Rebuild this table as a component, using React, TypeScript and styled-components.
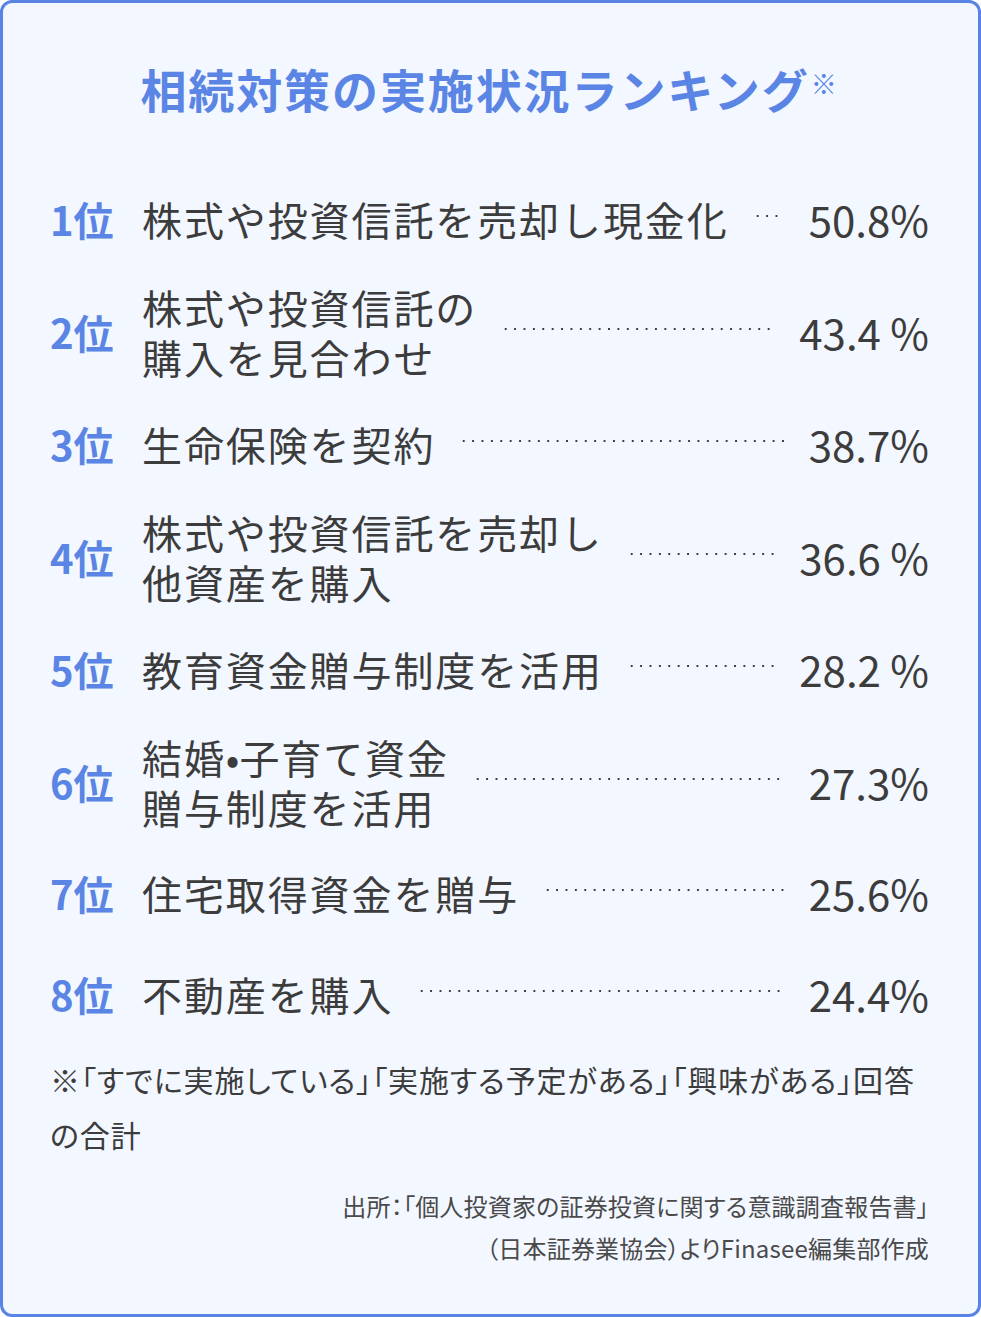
import React from "react";
import styled, { createGlobalStyle } from "styled-components";

const Global = createGlobalStyle`
  html, body { margin: 0; padding: 0; background: #ffffff; }
  body { font-family: "Noto Sans CJK JP", "Noto Sans", sans-serif; }
  * { box-sizing: border-box; }
`;

const Card = styled.div`
  width: 981px;
  height: 1317px;
  background: #f3f7ff;
  border: 3px solid #5a84e4;
  border-radius: 12px;
  padding: 53px 49px 0 47px;
  display: flex;
  flex-direction: column;
  color: #3c3c3c;
`;

const Title = styled.h1`
  margin: 0 0 49px;
  height: 64px;
  line-height: 64px;
  text-align: center;
  font-size: 46px;
  font-weight: 700;
  letter-spacing: 1.9px;
  color: #5a85e4;
`;

const Note = styled.sup`
  font-size: 26px;
  font-weight: 400;
  vertical-align: 14px;
  line-height: 0;
  margin-left: 1px;
`;

const List = styled.div`
  display: flex;
  flex-direction: column;
`;

const Row = styled.div<{ $space: number }>`
  display: flex;
  align-items: center;
  height: 100px;
  margin-top: ${(p) => p.$space}px;
`;

const Rank = styled.div`
  flex: none;
  width: 92px;
  font-size: 40px;
  font-weight: 700;
  color: #5a85e4;
  line-height: 1;
`;

const Label = styled.div`
  flex: none;
  font-size: 40px;
  letter-spacing: 1.9px;
  line-height: 50px;
  white-space: nowrap;
`;

const Dot = styled.span`
  font-feature-settings: "palt";
  letter-spacing: 0;
`;

const Leader = styled.div`
  flex: 1;
  height: 4px;
  margin: 0 25px 6px 24px;
  background-image: radial-gradient(circle, #3c3c3c 1.2px, transparent 1.5px);
  background-size: 9.4px 4px;
  background-repeat: repeat-x;
  background-position: left center;
`;

const Value = styled.div`
  flex: none;
  font-size: 42px;
  line-height: 1;
  white-space: pre;
`;

const Footnote = styled.p`
  margin: 8px 0 0;
  font-size: 30px;
  line-height: 55px;
  font-feature-settings: "palt";
  letter-spacing: 0.9px;
`;

const Source = styled.p`
  margin: 23px 0 0;
  text-align: right;
  font-size: 24px;
  line-height: 42px;
  color: #4a4a4a;
  font-feature-settings: "palt";
  letter-spacing: 0.2px;
`;

type Item = { rank: string; lines: React.ReactNode[]; value: string; space: number };

const items: Item[] = [
  { rank: "1位", lines: ["株式や投資信託を売却し現金化"], value: "50.8%", space: 0 },
  { rank: "2位", lines: ["株式や投資信託の", "購入を見合わせ"], value: "43.4 %", space: 13 },
  { rank: "3位", lines: ["生命保険を契約"], value: "38.7%", space: 12 },
  { rank: "4位", lines: ["株式や投資信託を売却し", "他資産を購入"], value: "36.6 %", space: 13 },
  { rank: "5位", lines: ["教育資金贈与制度を活用"], value: "28.2 %", space: 12 },
  {
    rank: "6位",
    lines: [
      <>
        結婚<Dot>•</Dot>子育て資金
      </>,
      "贈与制度を活用",
    ],
    value: "27.3%",
    space: 13,
  },
  { rank: "7位", lines: ["住宅取得資金を贈与"], value: "25.6%", space: 11 },
  { rank: "8位", lines: ["不動産を購入"], value: "24.4%", space: 1 },
];

export default function App() {
  return (
    <>
      <Global />
      <Card>
        <Title>
          相続対策の実施状況ランキング<Note>※</Note>
        </Title>
        <List>
          {items.map((it) => (
            <Row key={it.rank} $space={it.space}>
              <Rank>{it.rank}</Rank>
              <Label>
                {it.lines.map((l, i) => (
                  <React.Fragment key={i}>
                    {i > 0 && <br />}
                    {l}
                  </React.Fragment>
                ))}
              </Label>
              <Leader />
              <Value>{it.value}</Value>
            </Row>
          ))}
        </List>
        <Footnote>
          ※「すでに実施している」「実施する予定がある」「興味がある」回答の合計
        </Footnote>
        <Source>
          出所：「個人投資家の証券投資に関する意識調査報告書」
          <br />
          （日本証券業協会）よりFinasee編集部作成
        </Source>
      </Card>
    </>
  );
}
